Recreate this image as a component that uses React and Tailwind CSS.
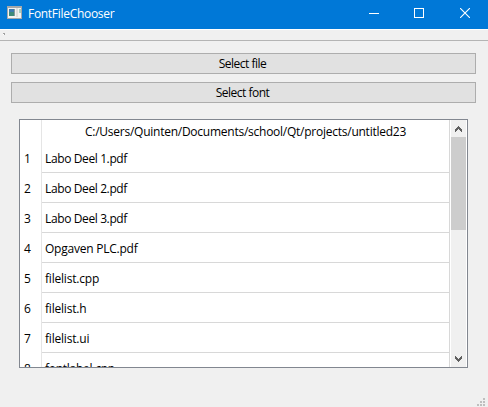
const files = [
  { name: 'Labo Deel 1.pdf', tracking: 'tracking-[-0.38px]' },
  { name: 'Labo Deel 2.pdf', tracking: 'tracking-[-0.38px]' },
  { name: 'Labo Deel 3.pdf', tracking: 'tracking-[-0.38px]' },
  { name: 'Opgaven PLC.pdf', tracking: 'tracking-[-0.23px]' },
  { name: 'filelist.cpp', tracking: 'tracking-[-0.2px]' },
  { name: 'filelist.h', tracking: 'tracking-[-0.2px]' },
  { name: 'filelist.ui', tracking: 'tracking-[-0.2px]' },
  { name: 'fontlabel.cpp', tracking: 'tracking-[-0.26px]' },
];

function TitleBar() {
  return (
    <header className="flex h-[29px] items-start bg-[#0078d7] text-white">
      <svg className="mt-[6px] ml-[7px] h-[13px] w-[15px]" viewBox="0 0 15 13" shapeRendering="crispEdges">
        <rect width="15" height="13" fill="#a4a8aa" />
        <rect x="1" y="2" width="13" height="10" fill="#f3f3f1" />
        <rect x="2" y="3" width="5" height="7" fill="#3d7ab0" />
        <rect x="2" y="6" width="5" height="4" fill="#3f8b78" />
        <rect x="7" y="3" width="1" height="7" fill="#8a9a9c" />
        <rect x="9" y="2" width="2" height="9" fill="#e0e0dc" />
        <rect x="12" y="3" width="2" height="4" fill="#a9cfc0" />
      </svg>
      <h1 className="ml-[6px] grow text-[12px] leading-[27px] tracking-[-0.3px] whitespace-nowrap">FontFileChooser</h1>
      <div className="mt-[8px] mr-[18px] flex">
        <svg className="mr-[35px] size-[10px]" viewBox="0 0 10 10" shapeRendering="crispEdges">
          <path d="M0 5.5H10" stroke="white" />
        </svg>
        <svg className="mr-[36px] size-[10px]" viewBox="0 0 10 10" shapeRendering="crispEdges">
          <rect x=".5" y=".5" width="9" height="9" fill="none" stroke="white" />
        </svg>
        <svg className="size-[10px]" viewBox="0 0 10 10">
          <path d="M0 0L10 10M10 0L0 10" stroke="white" strokeWidth="1.1" />
        </svg>
      </div>
    </header>
  );
}

function PushButton({ children }) {
  return (
    <button className="h-[21px] w-full border border-[#adadad] bg-[#e1e1e1] pr-[2px] text-center text-[12px] leading-[20px] tracking-[-0.5px]">
      {children}
    </button>
  );
}

function ScrollBar() {
  return (
    <div className="mr-px ml-px flex w-[15px] shrink-0 flex-col bg-[#f0f0f0]">
      <div className="flex h-[17px] shrink-0 justify-center pt-[6px]">
        <svg className="h-[6px] w-[7px]" viewBox="0 0 7 6" shapeRendering="crispEdges">
          <path d="M3 0h1v1h1v1h1v1h1v3h-1v-1h-1v-1h-1v-1h-1v1h-1v1h-1v1h-1v-3h1v-1h1v-1h1z" fill="#606060" />
        </svg>
      </div>
      <div className="h-[93px] shrink-0 bg-[#cdcdcd]" />
      <div className="grow" />
      <div className="flex h-[17px] shrink-0 justify-center pt-[6px]">
        <svg className="h-[6px] w-[7px]" viewBox="0 0 7 6" shapeRendering="crispEdges">
          <path d="M0 0h1v1h1v1h1v1h1v-1h1v-1h1v-1h1v3h-1v1h-1v1h-1v1h-1v-1h-1v-1h-1v-1h-1z" fill="#606060" />
        </svg>
      </div>
    </div>
  );
}

function FileTable() {
  return (
    <section className="mt-4 ml-[19px] flex h-[249px] w-[449px] overflow-hidden border border-[#828790] bg-white">
      <div className="h-full w-[430px] shrink-0 overflow-hidden border-r border-[#d8d8d8]">
        <div className="flex h-[23px]">
          <div className="w-[22px] border-r border-[#e5e5e5]" />
          <div className="grow text-center text-[12px] leading-[24px] tracking-[-0.25px] whitespace-nowrap">
            C:/Users/Quinten/Documents/school/Qt/projects/untitled23
          </div>
        </div>
        {files.map((file, i) => (
          <div key={file.name} className="flex h-[30px] text-[12px] leading-[32px]">
            <div className="w-[22px] border-r border-[#e5e5e5] pl-[4px]">{i + 1}</div>
            <div className={`grow border-b border-[#d8d8d8] pl-[3px] whitespace-nowrap ${file.tracking}`}>
              {file.name}
            </div>
          </div>
        ))}
      </div>
      <ScrollBar />
    </section>
  );
}

export default function App() {
  return (
    <main className="flex h-[407px] w-[488px] flex-col overflow-hidden bg-[#f0f0f0] font-['Open_Sans',sans-serif] text-black">
      <TitleBar />
      <div className="h-3 border-t border-b border-t-white border-b-[#b4b4b4] pt-[3px] pl-[3px]">
        <div className="size-[2px] border-t border-r border-[#a0a0a0] bg-white" />
      </div>
      <div className="mt-3 ml-[11px] flex w-[465px] flex-col gap-2">
        <PushButton>Select file</PushButton>
        <PushButton>Select font</PushButton>
      </div>
      <FileTable />
      <svg className="mt-auto mr-[3px] mb-px ml-auto size-[8px]" viewBox="0 0 8 8" shapeRendering="crispEdges">
        <path d="M6 0h2v2h-2zM3 3h2v2h-2zM6 3h2v2h-2zM0 6h2v2h-2zM3 6h2v2h-2zM6 6h2v2h-2z" fill="#bfbfbf" />
      </svg>
    </main>
  );
}
